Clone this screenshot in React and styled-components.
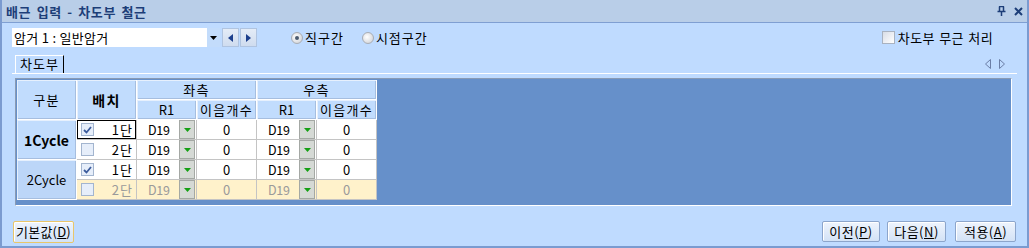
import React from 'react'
import styled, { createGlobalStyle } from 'styled-components'

const GlobalStyle = createGlobalStyle`
  html, body { margin: 0; padding: 0; background: #bfdbff; }
  body {
    font-family: "Noto Sans CJK KR", "Noto Sans", sans-serif;
    font-size: 13px;
    letter-spacing: 1px;
    word-spacing: 1px;
    color: #000;
  }
  * { box-sizing: border-box; }
`

const Window = styled.div`
  width: 1029px;
  height: 248px;
  background: #bfdbff;
  border-left: 2px solid #7b9bd0;
  border-right: 2px solid #7b9bd0;
  border-bottom: 2px solid #7b9bd0;
  display: flex;
  flex-direction: column;
`

const TitleBar = styled.div`
  height: 23px;
  flex: none;
  background: #b9cee8;
  border-bottom: 1px solid #7f9fd2;
  display: flex;
  align-items: center;
  justify-content: space-between;
  padding: 0 4px 0 4px;
`

const Title = styled.div`
  font-weight: 700;
  font-size: 13px;
  color: #1d3e78;
  letter-spacing: 0.6px;
  word-spacing: 2px;
`

const TitleIcons = styled.div`
  display: flex;
  gap: 8px;
  align-items: center;
`

const Body = styled.div`
  flex: 1;
  display: flex;
  flex-direction: column;
  padding: 5px 10px 0 10px;
`

const Toolbar = styled.div`
  height: 19px;
  display: flex;
  align-items: center;
`

const Combo = styled.div`
  width: 208px;
  height: 19px;
  background: #fff;
  display: flex;
  align-items: stretch;
`

const ComboText = styled.div`
  flex: 1;
  padding-left: 2px;
  line-height: 19px;
  letter-spacing: 0.3px;
  word-spacing: 0;
`

const ComboButton = styled.div`
  width: 13px;
  background: #c3dcfb;
  display: flex;
  align-items: center;
  justify-content: center;
`

const NavButton = styled.div`
  width: 17px;
  height: 19px;
  margin-left: ${p => p.$gap}px;
  background: linear-gradient(#e4ecf7, #cfdcef);
  border: 1px solid #b0c4e0;
  display: flex;
  align-items: center;
  justify-content: center;
`

const RadioGroup = styled.label`
  display: flex;
  align-items: center;
  gap: 2px;
  margin-left: ${p => p.$ml}px;
`

const Radio = styled.span`
  width: 12px;
  height: 12px;
  border-radius: 50%;
  border: 1px solid #a8adb5;
  background: radial-gradient(circle at 40% 40%, #ffffff, #c9ccd2);
  display: flex;
  align-items: center;
  justify-content: center;
  &::after {
    content: '';
    width: 4px;
    height: 4px;
    border-radius: 50%;
    background: ${p => (p.$on ? '#4a5a70' : 'transparent')};
  }
`

const Spacer = styled.div`
  flex: 1;
`

const CheckLabel = styled.label`
  display: flex;
  align-items: center;
  gap: 3px;
  margin-right: 24px;
  letter-spacing: 0.4px;
`

const Box = styled.span`
  width: 13px;
  height: 13px;
  border: 1px solid #a9b2c0;
  background: linear-gradient(135deg, #d8dde6, #ffffff);
  display: inline-flex;
  align-items: center;
  justify-content: center;
`

const TabStrip = styled.div`
  margin-top: 8px;
  height: 19px;
  border-bottom: 1px solid #ffffff;
  display: flex;
  align-items: flex-end;
  justify-content: space-between;
`

const Tab = styled.div`
  margin-left: 3px;
  height: 18px;
  padding: 0 4px 0 4px;
  border-left: 1px solid #ffffff;
  border-top: 1px solid #ffffff;
  border-right: 1px solid #000;
  line-height: 16px;
`

const TabArrows = styled.div`
  display: flex;
  gap: 8px;
  margin-right: 12px;
  align-self: center;
`

const Panel = styled.div`
  margin: 4px 5px 0 3px;
  height: 128px;
  background: #6690ca;
  border-top: 1px solid #8a9bb4;
  border-left: 1px solid #8a9bb4;
  border-bottom: 1px solid #ffffff;
  border-right: 1px solid #ffffff;
  padding: 1px;
`

const Grid = styled.table`
  border-collapse: separate;
  border-spacing: 0;
  table-layout: fixed;
  width: 360px;
  word-spacing: 0;
`

const Head = styled.th`
  height: 20px;
  padding: 0;
  font-weight: ${p => (p.$bold ? 700 : 400)};
  font-size: ${p => (p.$bold ? 14 : 13)}px;
  letter-spacing: ${p => (p.$latin ? 0 : 1.3)}px;
  background: ${p => (p.$alt ? '#bcd6f8' : '#c1dcfd')};
  border-right: 1px solid #ffffff;
  border-bottom: 1px solid #ffffff;
  box-shadow: inset 1px 1px #e6f0fd, inset -1px -1px #a6bedf;
  text-align: center;
  vertical-align: middle;
  line-height: 18px;
`

const Cell = styled.td`
  height: 20px;
  padding: 0;
  background: ${p => (p.$off ? '#fff2cb' : '#ffffff')};
  color: ${p => (p.$off ? '#9a9a9a' : '#000')};
  border-right: 1px solid #c4c4c4;
  border-bottom: 1px solid #c4c4c4;
  text-align: ${p => p.$align || 'center'};
  vertical-align: middle;
  line-height: 18px;
  letter-spacing: 0;
`

const CheckCell = styled.div`
  height: 19px;
  display: flex;
  align-items: center;
  justify-content: space-between;
  padding: 0 3px 0 4px;
  letter-spacing: 1px;
  outline: ${p => (p.$focus ? '1px solid #000' : 'none')};
  outline-offset: -1px;
`

const GridBox = styled.span`
  width: 13px;
  height: 13px;
  border: 1px solid #a3b5cf;
  background: #e6eefa;
  display: inline-flex;
  align-items: center;
  justify-content: center;
`

const ComboCell = styled.div`
  height: 19px;
  display: flex;
  align-items: center;
  justify-content: space-between;
  padding-left: 11px;
  font-size: 12.5px;
  letter-spacing: -0.3px;
`

const DropBtn = styled.span`
  width: 16px;
  height: 19px;
  margin-right: 1px;
  background: #d5d9d5;
  border: 1px solid #a4a8a4;
  display: inline-flex;
  align-items: center;
  justify-content: center;
`

const Footer = styled.div`
  margin-top: 15px;
  display: flex;
  align-items: flex-start;
  gap: 7px;
  padding-left: 1px;
  padding-right: 1px;
`

const Button = styled.button`
  height: ${p => (p.$hot ? 22 : 21)}px;
  min-width: ${p => p.$w}px;
  margin-right: ${p => p.$mr || 0}px;
  padding: 0 ${p => (p.$hot ? 2 : 3)}px;
  font-family: inherit;
  font-size: 13px;
  letter-spacing: ${p => (p.$hot ? 0.2 : 0.5)}px;
  word-spacing: 0;
  color: #000;
  background: linear-gradient(#eef4fd, #d3e2f6);
  border: 1px solid ${p => (p.$hot ? '#e9c66a' : '#8ca5cb')};
  border-radius: 2px;
  box-shadow: inset 1px 1px #ffffff;
  line-height: 16px;
  & u { text-decoration: underline; }
`

const Tri = ({ dir, color = '#1c3f8c', w = 5, h = 8 }) => {
  const pts = dir === 'left' ? `${w},0 ${w},${h} 0,${h / 2}` : `0,0 0,${h} ${w},${h / 2}`
  return (
    <svg width={w} height={h} viewBox={`0 0 ${w} ${h}`}>
      <polygon points={pts} fill={color} />
    </svg>
  )
}

const Down = ({ color = '#000', w = 7, h = 4 }) => (
  <svg width={w} height={h} viewBox={`0 0 ${w} ${h}`}>
    <polygon points={`0,0 ${w},0 ${w / 2},${h}`} fill={color} />
  </svg>
)

const Tick = () => (
  <svg width="9" height="8" viewBox="0 0 9 8">
    <polyline points="1,4 3.5,6.5 8,1" fill="none" stroke="#3b5b9c" strokeWidth="1.8" />
  </svg>
)

const HollowTri = ({ dir }) => (
  <svg width="6" height="10" viewBox="0 0 6 10">
    <polygon
      points={dir === 'left' ? '5.5,0.5 5.5,9.5 0.5,5' : '0.5,0.5 0.5,9.5 5.5,5'}
      fill="none"
      stroke="#6b7ea6"
      strokeWidth="1"
    />
  </svg>
)

const rows = [
  { cycle: '1Cycle', bold: true, dan: '1단', on: true, focus: true },
  { dan: '2단', on: false },
  { cycle: '2Cycle', bold: false, dan: '1단', on: true },
  { dan: '2단', on: false, off: true },
]

const BarCell = ({ off }) => (
  <Cell $off={off} $align="left">
    <ComboCell>
      <span>D19</span>
      <DropBtn>
        <Down color="#14a014" />
      </DropBtn>
    </ComboCell>
  </Cell>
)

export default function App() {
  return (
    <>
      <GlobalStyle />
      <Window>
        <TitleBar>
          <Title>배근 입력 - 차도부 철근</Title>
          <TitleIcons>
            <svg width="9" height="10" viewBox="0 0 9 10">
              <path d="M2 0.5h5M2.5 0.5v5M6.5 0.5v5M0.5 5.5h8M4.5 5.5v4.5" stroke="#1d3e78" strokeWidth="1.5" fill="none" />
            </svg>
            <svg width="9" height="9" viewBox="0 0 9 9">
              <path d="M1 1l7 7M8 1l-7 7" stroke="#1d3e78" strokeWidth="2" />
            </svg>
          </TitleIcons>
        </TitleBar>
        <Body>
          <Toolbar>
            <Combo>
              <ComboText>암거 1 : 일반암거</ComboText>
              <ComboButton>
                <Down />
              </ComboButton>
            </Combo>
            <NavButton $gap={2}>
              <Tri dir="left" />
            </NavButton>
            <NavButton $gap={1}>
              <Tri dir="right" />
            </NavButton>
            <RadioGroup $ml={34}>
              <Radio $on />
              직구간
            </RadioGroup>
            <RadioGroup $ml={18}>
              <Radio />
              시점구간
            </RadioGroup>
            <Spacer />
            <CheckLabel>
              <Box />
              차도부 무근 처리
            </CheckLabel>
          </Toolbar>
          <TabStrip>
            <Tab>차도부</Tab>
            <TabArrows>
              <HollowTri dir="left" />
              <HollowTri dir="right" />
            </TabArrows>
          </TabStrip>
          <Panel>
            <Grid>
              <colgroup>
                {[0, 1, 2, 3, 4, 5].map(i => (
                  <col key={i} style={{ width: 60 }} />
                ))}
              </colgroup>
              <thead>
                <tr>
                  <Head rowSpan={2}>구분</Head>
                  <Head rowSpan={2} $bold>배치</Head>
                  <Head colSpan={2}>좌측</Head>
                  <Head colSpan={2}>우측</Head>
                </tr>
                <tr>
                  <Head $latin>R1</Head>
                  <Head>이음개수</Head>
                  <Head $latin>R1</Head>
                  <Head>이음개수</Head>
                </tr>
              </thead>
              <tbody>
                {rows.map((r, i) => (
                  <tr key={i}>
                    {r.cycle && (
                      <Head rowSpan={2} $bold={r.bold} $alt={!r.bold} $latin>
                        {r.cycle}
                      </Head>
                    )}
                    <Cell $off={r.off}>
                      <CheckCell $focus={r.focus}>
                        <GridBox>{r.on && <Tick />}</GridBox>
                        <span>{r.dan}</span>
                      </CheckCell>
                    </Cell>
                    <BarCell off={r.off} />
                    <Cell $off={r.off}>0</Cell>
                    <BarCell off={r.off} />
                    <Cell $off={r.off}>0</Cell>
                  </tr>
                ))}
              </tbody>
            </Grid>
          </Panel>
          <Footer>
            <Button $hot $w={61}>
              기본값(<u>D</u>)
            </Button>
            <Spacer />
            <Button $w={58}>
              이전(<u>P</u>)
            </Button>
            <Button $w={59} $mr={2}>
              다음(<u>N</u>)
            </Button>
            <Button $w={61}>
              적용(<u>A</u>)
            </Button>
          </Footer>
        </Body>
      </Window>
    </>
  )
}
